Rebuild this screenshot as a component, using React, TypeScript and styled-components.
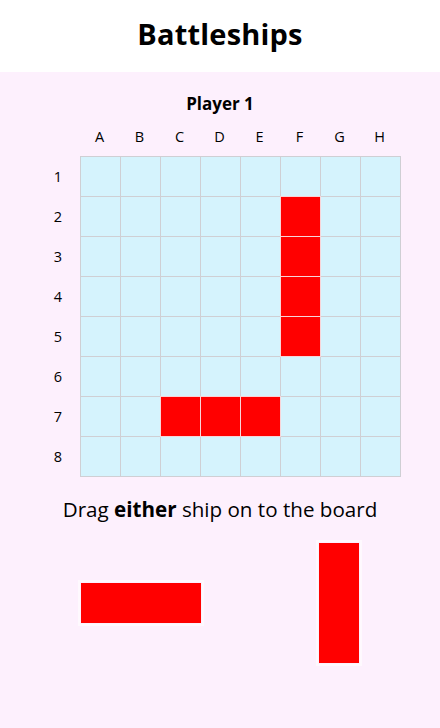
import React from "react";
import styled, { createGlobalStyle } from "styled-components";

const GlobalStyle = createGlobalStyle`
  html, body { margin: 0; padding: 0; }
  body {
    background: #fdf0fd;
    font-family: "Open Sans", "DejaVu Sans", sans-serif;
    color: #000;
  }
`;

const Page = styled.div`
  width: 440px;
  min-height: 728px;
  background: #fdf0fd;
  display: flex;
  flex-direction: column;
`;

const Header = styled.header`
  height: 72px;
  background: #ffffff;
  display: flex;
  align-items: center;
  justify-content: center;
`;

const Title = styled.h1`
  margin: 0 0 5px;
  font-size: 29px;
  font-weight: 700;
  letter-spacing: 0.2px;
`;

const Main = styled.main`
  display: flex;
  flex-direction: column;
  align-items: center;
`;

const PlayerName = styled.h2`
  margin: 20px 0 0;
  height: 24px;
  line-height: 24px;
  font-size: 17px;
  font-weight: 700;
`;

const Board = styled.div`
  display: grid;
  grid-template-columns: 40px repeat(8, 40px) 1px;
  grid-template-rows: 40px repeat(8, 40px) 1px;
`;

const ColLabel = styled.div`
  display: flex;
  align-items: center;
  justify-content: center;
  font-size: 14.5px;
`;

const RowLabel = styled.div`
  display: flex;
  align-items: center;
  justify-content: center;
  padding-right: 3px;
  font-size: 14.5px;
`;

const Cell = styled.div<{ $ship: boolean }>`
  width: 41px;
  height: 41px;
  box-sizing: border-box;
  border: 1px solid #cfcfd4;
  background: #d5f3fd;
  ${(p) =>
    p.$ship &&
    `
    background: #ff0000;
    border-color: #f8d4d8;
    position: relative;
    z-index: 1;
  `}
`;

const Instruction = styled.p`
  margin: 20px 0 0;
  font-size: 20.6px;
  line-height: 24px;
`;

const Ships = styled.div`
  width: 440px;
  box-sizing: border-box;
  padding: 22px 22px 0;
  display: flex;
  align-items: center;
  justify-content: space-around;
`;

const Ship = styled.div<{ $w: number; $h: number }>`
  width: ${(p) => p.$w}px;
  height: ${(p) => p.$h}px;
  background: #ff0000;
  outline: 2px solid rgba(255, 255, 255, 0.6);
  outline-offset: 1px;
`;

const cols = ["A", "B", "C", "D", "E", "F", "G", "H"];
const shipCells = new Set(["F2", "F3", "F4", "F5", "C7", "D7", "E7"]);

export default function App() {
  const cells: React.ReactNode[] = [];
  cells.push(<div key="corner" />);
  cols.forEach((c) => cells.push(<ColLabel key={"h" + c}>{c}</ColLabel>));
  cells.push(<div key="hpad" />);
  for (let r = 1; r <= 8; r++) {
    cells.push(<RowLabel key={"r" + r}>{r}</RowLabel>);
    cols.forEach((c) =>
      cells.push(<Cell key={c + r} $ship={shipCells.has(c + r)} />)
    );
    cells.push(<div key={"pad" + r} />);
  }

  return (
    <Page>
      <GlobalStyle />
      <Header>
        <Title>Battleships</Title>
      </Header>
      <Main>
        <PlayerName>Player 1</PlayerName>
        <Board>{cells}</Board>
        <Instruction>
          Drag <b>either</b> ship on to the board
        </Instruction>
        <Ships>
          <Ship $w={120} $h={40} />
          <Ship $w={40} $h={120} />
        </Ships>
      </Main>
    </Page>
  );
}
